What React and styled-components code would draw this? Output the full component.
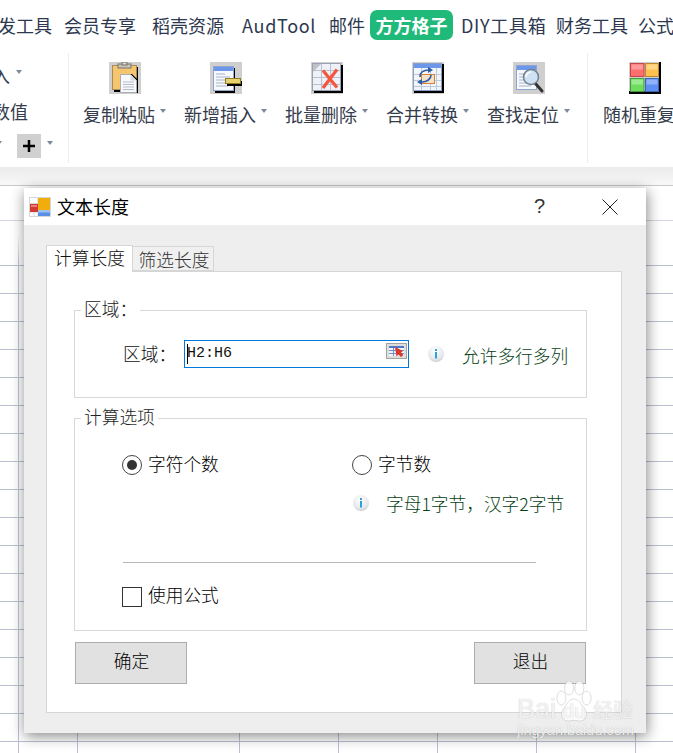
import { useId } from "react"
import styled, { createGlobalStyle } from "styled-components"

const CJK = `"Noto Sans CJK SC", "Noto Sans", sans-serif`

const GlobalStyle = createGlobalStyle`
  html, body { margin: 0; padding: 0; background: #fff; }
  body { font-family: ${CJK}; }
  * { box-sizing: border-box; }
`

// icons of the ribbon, drawn at 32x32 on the grey matte they have in the add-in
function ClipboardIcon() {
  return (
    <IconSvg viewBox="0 0 32 32">
      <rect width="32" height="32" fill="#cfcfcf" />
      <rect x="5" y="5" width="24" height="25" fill="#000" />
      <rect x="3.500" y="3.500" width="24" height="24" fill="#f6c66f" stroke="#a98b5a" />
      <rect x="9" y="2" width="13" height="4" fill="#c9c4ba" stroke="#77746c" />
      <rect x="13" y="0" width="5" height="3" fill="#d8d4cc" stroke="#77746c" />
      <path d="M14 12h9l6 6v13H14z" fill="#000" />
      <path d="M11.500 12.500h10l6 6v12h-16z" fill="#f8f9fb" stroke="#a9adb4" />
      <path d="M21.500 12.500v6h6z" fill="#d8dadd" />
      <path d="M14 20h11M14 22.500h11M14 25h11M14 27.500h11" stroke="#b4bccb" />
    </IconSvg>
  )
}

function InsertIcon() {
  return (
    <IconSvg viewBox="0 0 32 32">
      <rect width="32" height="32" fill="#cfcfcf" />
      <rect x="5" y="6" width="20" height="25" fill="#000" />
      <rect x="3.500" y="4.500" width="20" height="24" fill="#f7f9fd" stroke="#8ea6d0" />
      <rect x="4" y="5" width="19" height="4" fill="#6d97ea" />
      <path d="M6 12h9M6 15h14M6 18h10M6 21h10M6 24h12" stroke="#a5b3cc" />
      <rect x="17" y="19" width="15" height="5" fill="#000" />
      <rect x="15.500" y="16.500" width="15" height="5" fill="#e8d26c" stroke="#8f7d2a" />
    </IconSvg>
  )
}

function DeleteIcon() {
  return (
    <IconSvg viewBox="0 0 32 32">
      <rect width="32" height="32" fill="#cfcfcf" />
      <rect x="3" y="3" width="29" height="28" fill="#000" />
      <rect x="1.500" y="1.500" width="28" height="27" fill="#eef1f7" stroke="#9aa1b2" />
      <path d="M2 8.500h27M2 15.500h27M2 22.500h27M10.500 2v26M19.500 2v26" stroke="#b9c0cf" />
      <path d="M2 2h8L2 10z" fill="#bfc1c6" />
      <path d="M12 8.500l14 17M26 7.500L12 26" fill="none" stroke="#f4553c" strokeWidth="3.200" />
    </IconSvg>
  )
}

function MergeIcon() {
  return (
    <IconSvg viewBox="0 0 32 32">
      <rect width="32" height="32" fill="#cfcfcf" />
      <rect x="2" y="2" width="30" height="29" fill="#000" />
      <rect x="1.500" y="1.500" width="28" height="27" fill="#f2f5fa" stroke="#8aa0c8" />
      <rect x="2" y="2" width="27" height="4" fill="#6d97ea" />
      <path d="M2 12.500h27M2 18.500h27M2 24.500h27M9.500 6v22M18.500 6v22M24.500 6v22" stroke="#bcc8dc" />
      <rect x="9.500" y="12.500" width="13" height="9" fill="#f2e2c8" stroke="#d9803a" />
      <path d="M8 15c0-4 3-7 9-7" fill="none" stroke="#2f5da6" strokeWidth="1.600" />
      <path d="M16 5l5 3-5 3z" fill="#2f5da6" />
      <path d="M19 13c0 4-4 7-9 7" fill="none" stroke="#2f5da6" strokeWidth="1.600" />
      <path d="M5 20l5-3v6z" fill="#2f5da6" />
    </IconSvg>
  )
}

function FindIcon() {
  return (
    <IconSvg viewBox="0 0 32 32">
      <rect width="32" height="32" fill="#cfcfcf" />
      <rect x="3.500" y="3.500" width="20" height="24" fill="#f7f9fd" stroke="#8ea6d0" />
      <rect x="4" y="4" width="19" height="4" fill="#6d97ea" />
      <path d="M6 12h8M6 15h8M6 18h8M6 21h10M6 24h12" stroke="#a5b3cc" />
      <path d="M22 21l7 8" stroke="#333" strokeWidth="3" strokeLinecap="round" />
      <circle cx="18" cy="15" r="7.500" fill="#cfe2f4" stroke="#6f7f8c" strokeWidth="1.500" />
      <path d="M13 15a5 5 0 0 1 5-5" fill="none" stroke="#fff" strokeWidth="1.500" />
    </IconSvg>
  )
}

function ColorsIcon() {
  return (
    <IconSvg viewBox="0 0 32 32">
      <rect width="32" height="32" fill="#cfcfcf" />
      <rect y="29" width="32" height="3" fill="#000" />
      <rect x="30" width="2" height="32" fill="#000" />
      <rect x="1.500" y="1.500" width="13.500" height="13" fill="#ff6f6f" stroke="#c54747" />
      <rect x="2.500" y="2.500" width="11.500" height="5" fill="#ff9a9a" />
      <rect x="16.500" y="1.500" width="13" height="13" fill="#ffc050" stroke="#b98a2d" />
      <rect x="17.500" y="2.500" width="11" height="5" fill="#ffd688" />
      <rect x="1.500" y="16.500" width="13.500" height="13" fill="#6fdc60" stroke="#479a3c" />
      <rect x="2.500" y="17.500" width="11.500" height="5" fill="#9cea90" />
      <rect x="16.500" y="16.500" width="13" height="13" fill="#5d8ff5" stroke="#3f66b5" />
      <rect x="17.500" y="17.500" width="11" height="5" fill="#8fb2fa" />
    </IconSvg>
  )
}

function AppIcon() {
  return (
    <GlyphSvg width="22" height="20" viewBox="0 0 22 20">
      <rect x="0.500" y="0.500" width="21" height="19" fill="#fff" stroke="#d6d6d6" />
      <path d="M1 6.500h8M1 15h8M5 15v4M9 1v18" stroke="#d6d6d6" />
      <rect x="9" y="1" width="12" height="12" fill="#f0ad0c" />
      <rect x="9" y="13" width="12" height="6" fill="#5b8fe6" />
      <rect x="9" y="13" width="12" height="2.500" fill="#9cc0f4" />
      <rect x="1" y="7" width="8" height="8" fill="#d23b34" />
      <rect x="2" y="8" width="6" height="2" fill="#ea7d76" />
    </GlyphSvg>
  )
}

function PickerIcon() {
  return (
    <GlyphSvg width="21" height="16" viewBox="0 0 21 16">
      <rect x="0.500" y="0.500" width="20" height="15" fill="#dedede" stroke="#a3a3a3" />
      <rect x="3" y="3" width="15" height="10" fill="#f4f6fb" />
      <rect x="3" y="3" width="15" height="2" fill="#4f79c9" />
      <path d="M3 7.500h15M3 10.500h15M7.500 5v8" stroke="#6f8fc8" />
      <path d="M9 4l8 4-2 1.500 2.500 2.500-2.500 2-2.500-2.500-2 2z" fill="#d8392b" />
    </GlyphSvg>
  )
}

function InfoIcon() {
  const id = useId()
  return (
    <GlyphSvg width="16" height="16" viewBox="0 0 16 16">
      <defs>
        <radialGradient id={id} cx="45%" cy="30%" r="75%">
          <stop offset="0%" stopColor="#ffffff" />
          <stop offset="70%" stopColor="#e6e7ea" />
          <stop offset="100%" stopColor="#c6c8cc" />
        </radialGradient>
      </defs>
      <circle cx="8" cy="8" r="8" fill={`url(#${id})`} />
      <rect x="7" y="3" width="2" height="2" fill="#2aa3dc" />
      <rect x="7" y="6" width="2" height="6.500" fill="#2aa3dc" />
    </GlyphSvg>
  )
}

function Paw() {
  return (
    <GlyphSvg width="36" height="44" viewBox="0 0 40 44" preserveAspectRatio="none">
      <g fill="rgba(255,255,255,.8)" stroke="rgba(120,120,120,.25)">
        <ellipse cx="6" cy="17" rx="5" ry="7" />
        <ellipse cx="14.500" cy="7" rx="5" ry="7" />
        <ellipse cx="26" cy="7" rx="5" ry="7" />
        <ellipse cx="34" cy="17" rx="5" ry="7" />
        <path d="M20 18c6 0 8 6 12 10 4 5 1 13-7 12-4-1-7-1-10 0-8 1-11-7-7-12 4-4 6-10 12-10z" />
      </g>
    </GlyphSvg>
  )
}

const menuItems = [
  { label: "开发工具", gap: 0 },
  { label: "会员专享", gap: 12 },
  { label: "稻壳资源", gap: 16 },
  { label: "AudTool", gap: 18, width: 73 },
  { label: "邮件", gap: 14 },
  { label: "方方格子", gap: 5, active: true },
  { label: "DIY工具箱", gap: 8, width: 83 },
  { label: "财务工具", gap: 12 },
  { label: "公式向导", gap: 10 },
]

const ribbonTools = [
  { label: "复制粘贴", Icon: ClipboardIcon },
  { label: "新增插入", Icon: InsertIcon },
  { label: "批量删除", Icon: DeleteIcon },
  { label: "合并转换", Icon: MergeIcon },
  { label: "查找定位", Icon: FindIcon },
]

function RibbonTool({ label, Icon }) {
  return (
    <Tool>
      <Icon />
      <ToolLabel>
        {label}
        <Caret />
      </ToolLabel>
    </Tool>
  )
}

export default function App() {
  return (
    <Page>
      <GlobalStyle />
      <MenuBar>
        {menuItems.map((item) => (
          <MenuItem key={item.label} $gap={item.gap} $width={item.width} $active={item.active}>
            {item.label}
          </MenuItem>
        ))}
      </MenuBar>

      <Ribbon>
        <SideTools>
          <SideRow $shift={-26}>
            插入<Caret />
          </SideRow>
          <SideRow $shift={-8}>数值</SideRow>
          <SideRow $shift={-4}>
            <Caret />
            <PlusButton>
              <svg width="12" height="12" viewBox="0 0 12 12">
                <path d="M6 0v12M0 6h12" stroke="#000" strokeWidth="2.500" />
              </svg>
            </PlusButton>
            <Caret />
          </SideRow>
        </SideTools>
        <RibbonSep $left={0} $right={5} />
        {ribbonTools.map((tool) => (
          <RibbonTool key={tool.label} {...tool} />
        ))}
        <RibbonSep $left={8} $right={6} />
        <RibbonTool label="随机重复" Icon={ColorsIcon} />
      </Ribbon>

      <RibbonShade />

      <Sheet>
        <SheetHead />
        <SheetCells />

        <Dialog>
          <TitleBar>
            <AppIcon />
            <DialogTitle>文本长度</DialogTitle>
            <HelpMark>?</HelpMark>
            <GlyphSvg width="16" height="16" viewBox="0 0 16 16">
              <path d="M0.500 0.500l15 15M15.500 0.500l-15 15" stroke="#222" fill="none" />
            </GlyphSvg>
          </TitleBar>

          <DialogBody>
            <Tabs>
              <Tab $active>计算长度</Tab>
              <Tab>筛选长度</Tab>
            </Tabs>

            <TabPanel>
              <Group $height={98}>
                <GroupTitle>区域：</GroupTitle>
                <RangeRow>
                  <FieldLabel>区域：</FieldLabel>
                  <RangeBox>
                    <RangeText>H2:H6</RangeText>
                    <PickerIcon />
                  </RangeBox>
                  <InfoIcon />
                  <Hint $gap={18} $drop={2}>允许多行多列</Hint>
                </RangeRow>
              </Group>

              <Group $height={223} $top={10}>
                <GroupTitle>计算选项</GroupTitle>
                <OptionsBody>
                  <RadioRow>
                    <Option>
                      <Radio $checked />
                      <OptionText>字符个数</OptionText>
                    </Option>
                    <Option>
                      <Radio />
                      <OptionText>字节数</OptionText>
                    </Option>
                  </RadioRow>
                  <HintRow>
                    <InfoIcon />
                    <Hint $gap={17}>字母1字节，汉字2字节</Hint>
                  </HintRow>
                  <Divider />
                  <Option>
                    <CheckBox />
                    <OptionText $lift={7}>使用公式</OptionText>
                  </Option>
                </OptionsBody>
              </Group>

              <Actions>
                <ActionButton>确定</ActionButton>
                <ActionButton>退出</ActionButton>
              </Actions>
            </TabPanel>
          </DialogBody>
        </Dialog>

        <Watermark>
          <WatermarkLogo>
            <span>Bai</span>
            <PawWrap>
              <Paw />
              <PawText>du</PawText>
            </PawWrap>
            <WatermarkCn>经验</WatermarkCn>
          </WatermarkLogo>
          <WatermarkUrl>jingyan.baidu.com</WatermarkUrl>
        </Watermark>
      </Sheet>
    </Page>
  )
}

const Page = styled.div`
  width: 673px;
  height: 753px;
  overflow: hidden;
  display: flex;
  flex-direction: column;
  background: #fff;
`

const GlyphSvg = styled.svg`
  display: block;
  flex: none;
`

const MenuBar = styled.div`
  height: 52px;
  flex: none;
  display: flex;
  align-items: center;
  margin-left: -20px;
  padding-bottom: 3px;
  white-space: nowrap;
  font-size: 18px;
  color: #2c3850;
`

const MenuItem = styled.div`
  flex: none;
  margin-left: ${(p) => p.$gap}px;
  ${(p) => p.$width && `width: ${p.$width}px; letter-spacing: .7px;`}
  ${(p) =>
    p.$active &&
    `
    width: 83px;
    height: 30px;
    line-height: 30px;
    text-align: center;
    border-radius: 7px;
    background: #1fba7a;
    color: #fff;
    font-weight: 700;
    margin-top: 1px;
  `}
`

const Ribbon = styled.div`
  height: 115px;
  flex: none;
  display: flex;
  overflow: hidden;
  color: #353c4c;
  font-size: 18px;
`

const SideTools = styled.div`
  width: 68px;
  flex: none;
  overflow: hidden;
  display: flex;
  flex-direction: column;
`

const SideRow = styled.div`
  height: 36px;
  flex: none;
  display: flex;
  align-items: center;
  gap: 6px;
  margin-left: ${(p) => p.$shift}px;
  white-space: nowrap;
  &:first-child { margin-top: 5px; }
  &:last-child { margin-top: -1px; }
`

const PlusButton = styled.div`
  width: 24px;
  height: 24px;
  margin-left: 9px;
  display: flex;
  align-items: center;
  justify-content: center;
  background: #d0d0d0;
`

const RibbonSep = styled.div`
  width: 1px;
  flex: none;
  margin: 1px ${(p) => p.$right}px 4px ${(p) => p.$left}px;
  background: #eeeeee;
`

const Tool = styled.div`
  width: 101px;
  flex: none;
  padding-top: 10px;
  display: flex;
  flex-direction: column;
  align-items: center;
`

const IconSvg = styled.svg`
  width: 32px;
  height: 32px;
  display: block;
`

const ToolLabel = styled.div`
  margin-top: 7px;
  height: 26px;
  line-height: 26px;
  display: flex;
  align-items: center;
  gap: 5px;
  white-space: nowrap;
`

const Caret = styled.span`
  flex: none;
  width: 0;
  height: 0;
  margin-top: -6px;
  border-left: 3.500px solid transparent;
  border-right: 3.500px solid transparent;
  border-top: 4px solid #7f8899;
`

const RibbonShade = styled.div`
  height: 19px;
  flex: none;
  background: linear-gradient(#ebebeb, #f8f8f8);
  border-bottom: 1px solid #c9c9c9;
`

const Sheet = styled.div`
  flex: 1;
  position: relative;
  display: flex;
  flex-direction: column;
`

const SheetHead = styled.div`
  height: 79px;
  flex: none;
  background:
    linear-gradient(#d4d7df, #d4d7df) 0 34px / 100% 1px no-repeat,
    linear-gradient(transparent, #b9c0d2) 18px 48px / 1px 31px no-repeat;
`

const SheetCells = styled.div`
  flex: 1;
  background-image:
    linear-gradient(#b9c0d2, #b9c0d2),
    linear-gradient(#b9c0d2, #b9c0d2),
    linear-gradient(#b9c0d2, #b9c0d2),
    linear-gradient(#b9c0d2, #b9c0d2),
    linear-gradient(#b9c0d2, #b9c0d2),
    linear-gradient(#b9c0d2, #b9c0d2),
    linear-gradient(#b9c0d2, #b9c0d2),
    repeating-linear-gradient(#b9c0d2 0 1px, transparent 1px 28px);
  background-size:
    1px 100%, 1px 100%, 1px 100%, 1px 100%, 1px 100%, 1px 100%, 1px 100%, 100% 100%;
  background-position:
    18px 0, 77px 0, 239px 0, 338px 0, 437px 0, 536px 0, 635px 0, 0 0;
  background-repeat: no-repeat;
`

const Dialog = styled.div`
  position: absolute;
  top: 2px;
  left: 24px;
  width: 622px;
  height: 545px;
  display: flex;
  flex-direction: column;
  background: #eeeeee;
  box-shadow: 1px 3px 13px rgba(0, 0, 0, 0.48);
  font-weight: 300;
`

const TitleBar = styled.div`
  height: 37px;
  flex: none;
  display: flex;
  align-items: center;
  padding: 0 28px 0 5px;
  background: #fff;
`

const DialogTitle = styled.div`
  margin-left: 6px;
  margin-bottom: 2px;
  font-size: 18px;
  font-weight: 400;
  color: #000;
  flex: 1;
`

const HelpMark = styled.div`
  margin-right: 57px;
  font-family: "Liberation Sans", sans-serif;
  font-size: 20px;
  color: #333;
`

const DialogBody = styled.div`
  flex: 1;
  display: flex;
  flex-direction: column;
  padding: 20px 24px 20px 22px;
`

const Tabs = styled.div`
  height: 27px;
  flex: none;
  display: flex;
  align-items: flex-end;
  position: relative;
  z-index: 1;
  margin-bottom: -1px;
`

const Tab = styled.div`
  display: flex;
  align-items: center;
  justify-content: center;
  border: 1px solid #d6d6d6;
  font-size: 17.700px;
  white-space: nowrap;
  ${(p) =>
    p.$active
      ? `
    width: 87px;
    height: 27px;
    padding-bottom: 4px;
    background: #fff;
    border-bottom: none;
    color: #111;
  `
      : `
    width: 81px;
    height: 25px;
    padding-left: 2px;
    margin-bottom: 1px;
    background: #f0f0f0;
    border-left: none;
    color: #333;
  `}
`

const TabPanel = styled.div`
  flex: 1;
  padding: 28px 34px 0 27px;
  background: #fff;
  border: 1px solid #d6d6d6;
`

const Group = styled.fieldset`
  height: ${(p) => p.$height}px;
  margin: ${(p) => p.$top || 0}px 0 0;
  padding: 0;
  min-width: 0;
  border: 1px solid #d8d8d8;
`

const GroupTitle = styled.legend`
  margin-left: 6px;
  padding: 0 3px;
  height: 20px;
  line-height: 16px;
  font-size: 17.700px;
  color: #222;
`

const RangeRow = styled.div`
  display: flex;
  align-items: center;
  margin-top: 20px;
  padding-left: 48px;
`

const FieldLabel = styled.div`
  width: 61px;
  margin-bottom: 2px;
  font-size: 17.700px;
  color: #111;
`

const RangeBox = styled.div`
  width: 225px;
  height: 28px;
  margin-right: 19px;
  display: flex;
  align-items: flex-start;
  justify-content: space-between;
  padding: 2px 1px 0 2px;
  border: 1px solid #0078d7;
`

const RangeText = styled.div`
  border-left: 1px solid #000;
  margin-top: 1px;
  height: 20px;
  line-height: 20px;
  text-indent: -1px;
  font-family: "Liberation Mono", monospace;
  font-size: 15px;
  font-weight: 400;
  color: #111;
`

const Hint = styled.div`
  margin-left: ${(p) => p.$gap}px;
  margin-top: ${(p) => p.$drop || 0}px;
  font-size: 17.700px;
  color: #063f14;
  white-space: nowrap;
`

const OptionsBody = styled.div`
  padding: 27px 50px 0 47px;
`

const RadioRow = styled.div`
  display: grid;
  grid-template-columns: 230px 1fr;
`

const Option = styled.div`
  display: flex;
  align-items: center;
  gap: 6px;
  height: 20px;
  font-size: 17.700px;
  color: #000;
  white-space: nowrap;
`

const OptionText = styled.span`
  margin-bottom: ${(p) => p.$lift || 5}px;
`

const Radio = styled.span`
  width: 20px;
  height: 20px;
  flex: none;
  display: flex;
  align-items: center;
  justify-content: center;
  border: 1px solid #444;
  border-radius: 50%;
  background: #fff;
  &::after {
    content: "";
    width: 10px;
    height: 10px;
    border-radius: 50%;
    background: ${(p) => (p.$checked ? "#333" : "transparent")};
  }
`

const CheckBox = styled.span`
  width: 20px;
  height: 20px;
  flex: none;
  border: 1px solid #333;
  background: #fff;
`

const HintRow = styled.div`
  display: flex;
  align-items: center;
  height: 20px;
  margin-top: 18px;
  margin-right: -50px;
  padding-left: 231px;
`

const Divider = styled.div`
  height: 1px;
  margin: 49px 0 24px 1px;
  background: #b8b8b8;
`

const Actions = styled.div`
  display: flex;
  justify-content: space-between;
  margin-top: 11px;
  padding: 0 1px;
`

const ActionButton = styled.div`
  width: 112px;
  height: 42px;
  display: flex;
  align-items: center;
  justify-content: center;
  padding: 0 0 7px 1px;
  background: #e1e1e1;
  border: 1px solid #adadad;
  font-size: 17.700px;
  color: #000;
`

const Watermark = styled.div`
  position: absolute;
  left: 517px;
  top: 495px;
  width: 120px;
  color: rgba(255, 255, 255, 0.8);
  text-shadow: 0 0 1px rgba(90, 90, 90, 0.4);
  font-family: "Liberation Sans", sans-serif;
  white-space: nowrap;
`

const WatermarkLogo = styled.div`
  display: flex;
  align-items: flex-end;
  height: 42px;
  font-size: 27px;
  line-height: 27px;
`

const PawWrap = styled.div`
  position: relative;
  margin-bottom: -2px;
`

const PawText = styled.span`
  position: absolute;
  left: 7px;
  bottom: 4px;
  font-size: 20px;
  line-height: 20px;
  color: rgba(255, 255, 255, 0.9);
`

const WatermarkCn = styled.span`
  margin-left: 1px;
  font-family: ${CJK};
  font-size: 20px;
  line-height: 26px;
`

const WatermarkUrl = styled.div`
  font-size: 14.500px;
  line-height: 14px;
`
